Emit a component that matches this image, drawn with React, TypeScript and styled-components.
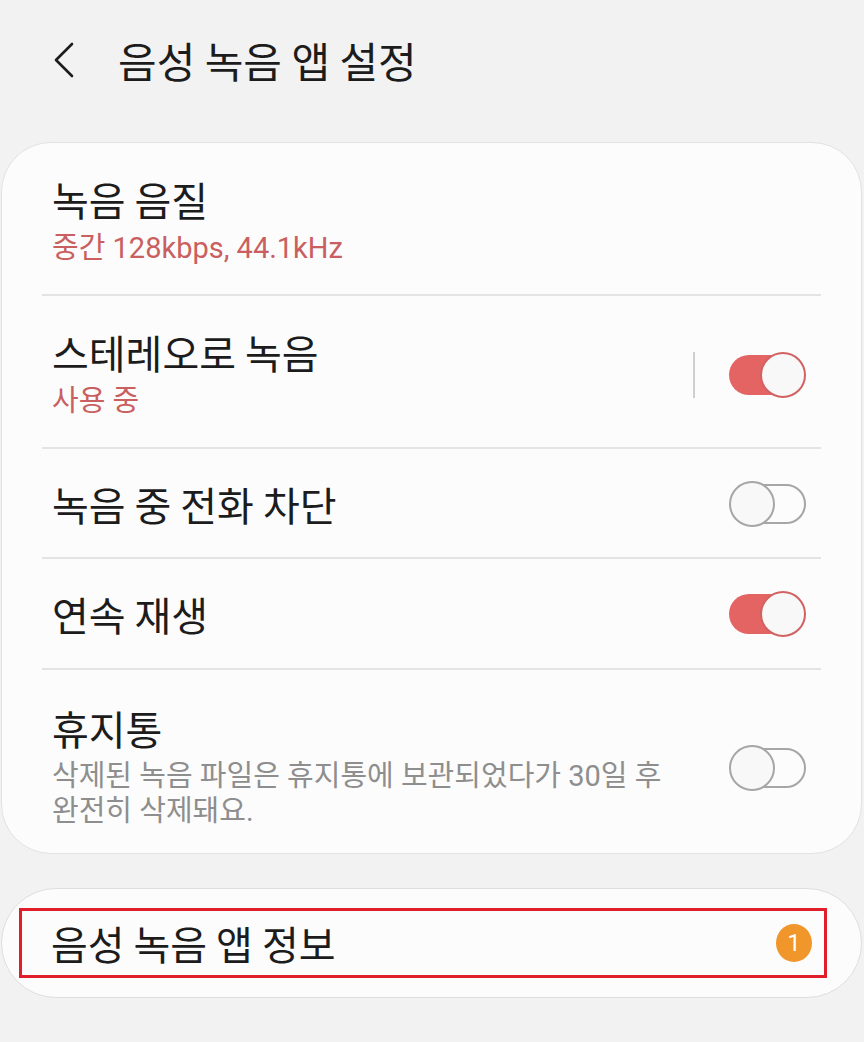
import React from "react";
import styled, { createGlobalStyle } from "styled-components";

const Global = createGlobalStyle`
  html, body { margin: 0; padding: 0; background: #f2f2f2; }
  body { font-family: Roboto, "Noto Sans CJK KR", sans-serif; }
  * { box-sizing: border-box; }
`;

const Page = styled.div`
  width: 864px;
  min-height: 1042px;
  background: #f2f2f2;
  display: flex;
  flex-direction: column;
`;

const Header = styled.header`
  height: 142px;
  display: flex;
  align-items: flex-start;
  padding: 34px 0 0 52px;
  gap: 24px;
`;

const BackButton = styled.div`
  width: 42px;
  height: 52px;
  display: flex;
  align-items: center;
  justify-content: flex-start;
`;

const Title = styled.h1`
  margin: 0;
  font-family: "Noto Sans CJK KR", sans-serif;
  font-weight: 400;
  font-size: 42px;
  line-height: 52px;
  height: 52px;
  color: #1c1c1c;
`;

const Card = styled.section`
  margin: 0 2px 0 1px;
  background: #fcfcfc;
  border: 1px solid #e2e2e2;
  border-radius: 50px;
  padding: 0 40px 0 40px;
`;

const Row = styled.div<{ $last?: boolean; $pad?: string }>`
  display: flex;
  align-items: center;
  padding: ${(p) => p.$pad || "34px 15px 28px 10px"};
  border-bottom: ${(p) => (p.$last ? "none" : "2px solid #e4e4e4")};
`;

const TextCol = styled.div`
  flex: 1;
  display: flex;
  flex-direction: column;
`;

const RowTitle = styled.div`
  font-family: "Noto Sans CJK KR", sans-serif;
  font-size: 40px;
  line-height: 44px;
  height: 44px;
  color: #1c1c1c;
`;

const RowSub = styled.div<{ $tone?: "red" | "gray" }>`
  margin-top: 9px;
  font-family: Roboto, "Noto Sans CJK KR", sans-serif;
  font-size: 29px;
  line-height: ${(p) => (p.$tone === "gray" ? "35px" : "36px")};
  color: ${(p) => (p.$tone === "gray" ? "#8e8e8e" : "#c9605f")};
  white-space: pre-line;
`;

const VSep = styled.div`
  width: 2px;
  height: 46px;
  background: #cfcfcf;
  margin-right: 34px;
`;

const Toggle = styled.div`
  position: relative;
  width: 77px;
  height: 46px;
  flex-shrink: 0;
`;

const Track = styled.div<{ $on: boolean }>`
  position: absolute;
  top: 3px;
  left: ${(p) => (p.$on ? "0" : "2px")};
  right: ${(p) => (p.$on ? "6px" : "0")};
  height: 40px;
  border-radius: 20px;
  background: ${(p) => (p.$on ? "#e46464" : "transparent")};
  border: ${(p) => (p.$on ? "none" : "2.5px solid #a6a6a6")};
`;

const Knob = styled.div<{ $on: boolean }>`
  position: absolute;
  top: 0;
  ${(p) => (p.$on ? "right: 0;" : "left: 0;")}
  width: 46px;
  height: 46px;
  border-radius: 50%;
  background: #f8f8f8;
  border: 2.5px solid ${(p) => (p.$on ? "#d26262" : "#a6a6a6")};
`;

const Switch = ({ on }: { on: boolean }) => (
  <Toggle>
    <Track $on={on} />
    <Knob $on={on} />
  </Toggle>
);

const InfoCard = styled.section`
  margin: 34px 2px 0 1px;
  background: #fcfcfc;
  border: 1px solid #dedede;
  border-radius: 55px;
  padding: 19px 34px 19px 17px;
`;

const Highlight = styled.div`
  height: 70px;
  border: 3px solid #e01f2b;
  display: flex;
  align-items: center;
  padding: 0 12px 0 29px;
`;

const InfoTitle = styled.div`
  flex: 1;
  font-family: "Noto Sans CJK KR", sans-serif;
  font-size: 40px;
  line-height: 44px;
  height: 44px;
  color: #1c1c1c;
`;

const Badge = styled.div`
  width: 36px;
  height: 38px;
  border-radius: 50%;
  background: #f0962b;
  color: #ffffff;
  font-family: Roboto, sans-serif;
  font-size: 24px;
  display: flex;
  align-items: center;
  justify-content: center;
`;

export default function App() {
  return (
    <Page>
      <Global />
      <Header>
        <BackButton>
          <svg width="24" height="36" viewBox="0 0 24 36">
            <path d="M20 2 L4 18 L20 34" fill="none" stroke="#1c1c1c" strokeWidth="2.6" strokeLinecap="round" strokeLinejoin="round" />
          </svg>
        </BackButton>
        <Title>음성 녹음 앱 설정</Title>
      </Header>
      <Card>
        <Row>
          <TextCol>
            <RowTitle>녹음 음질</RowTitle>
            <RowSub>중간 128kbps, 44.1kHz</RowSub>
          </TextCol>
        </Row>
        <Row>
          <TextCol>
            <RowTitle>스테레오로 녹음</RowTitle>
            <RowSub>사용 중</RowSub>
          </TextCol>
          <VSep />
          <Switch on />
        </Row>
        <Row $pad="32px 15px 30px 10px">
          <TextCol>
            <RowTitle>녹음 중 전화 차단</RowTitle>
          </TextCol>
          <Switch on={false} />
        </Row>
        <Row $pad="32px 15px 31px 10px">
          <TextCol>
            <RowTitle>연속 재생</RowTitle>
          </TextCol>
          <Switch on />
        </Row>
        <Row $last $pad="36px 15px 24px 10px">
          <TextCol>
            <RowTitle>휴지통</RowTitle>
            <RowSub $tone="gray">
              {"삭제된 녹음 파일은 휴지통에 보관되었다가 30일 후\n완전히 삭제돼요."}
            </RowSub>
          </TextCol>
          <Switch on={false} />
        </Row>
      </Card>
      <InfoCard>
        <Highlight>
          <InfoTitle>음성 녹음 앱 정보</InfoTitle>
          <Badge>1</Badge>
        </Highlight>
      </InfoCard>
    </Page>
  );
}
